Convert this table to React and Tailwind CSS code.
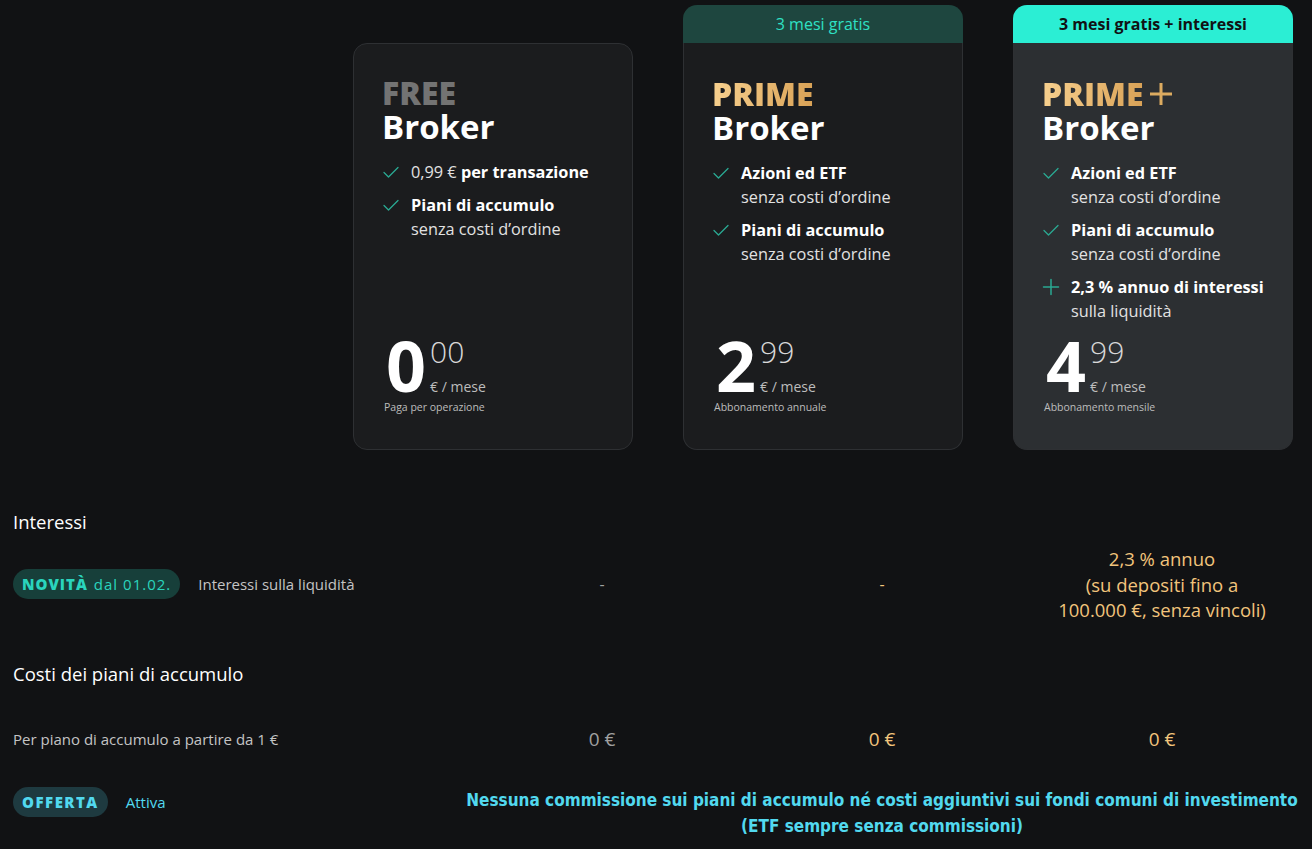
import React from "react";

const Check = () => (
  <svg width="18" height="18" viewBox="0 0 18 18" fill="none" className="shrink-0 mt-[3px]">
    <path d="M2 9.5l4.5 4.5L16 4.5" stroke="#2aa992" strokeWidth="1.3" strokeLinecap="round" strokeLinejoin="round" />
  </svg>
);

const Plus = () => (
  <svg width="18" height="18" viewBox="0 0 18 18" fill="none" className="shrink-0 mt-[3px]">
    <path d="M9 1.5v15M1.5 9h15" stroke="#2aa992" strokeWidth="1.5" strokeLinecap="round" />
  </svg>
);

const Feature = ({ icon, children }) => (
  <div className="flex gap-[11px]">
    {icon === "plus" ? <Plus /> : <Check />}
    <div className="text-[16.3px] leading-[24px] text-[#e2e2e2]">{children}</div>
  </div>
);

const B = ({ children }) => <b className="font-bold text-white">{children}</b>;

const Price = ({ whole, cents, note }) => (
  <div className="mt-auto">
    <div className="flex items-start">
      <span className="text-[70px] leading-[70px] font-bold text-white pl-[4px]">{whole}</span>
      <div className="flex flex-col ml-[4px]">
        <span className="text-[30px] leading-[29px] font-light text-[#d8d8d8] mt-[7px]">{cents}</span>
        <span className="text-[14px] leading-[13px] text-[#bdbdbd] mt-[14px]">€ / mese</span>
      </div>
    </div>
    <div className="text-[10.5px] leading-[12px] text-[#bdbdbd] mt-[1px] pl-[2px]">{note}</div>
  </div>
);

const PlanCard = ({ banner, bannerClass, bodyClass, title, plus, children, price }) => (
  <div className="flex flex-col">
    {banner && (
      <div className={`h-[38px] rounded-t-[14px] flex items-center justify-center text-[16px] ${bannerClass}`}>
        {banner}
      </div>
    )}
    <div
      className={`h-[407px] flex flex-col border border-[#2e3033] px-[28px] pb-[36px] ${
        banner ? "rounded-b-[14px] border-t-0 pt-[34px]" : "rounded-[14px] pt-[32px]"
      } ${bodyClass}`}
    >
      <div>
        <div className="flex items-center gap-[5px] text-[32px] leading-[33px] font-extrabold">{title}{plus}</div>
        <div className="text-[33px] leading-[36px] font-bold text-white">Broker</div>
      </div>
      <div className="mt-[15px] flex flex-col gap-[9px]">{children}</div>
      {price}
    </div>
  </div>
);

const gold = "bg-gradient-to-r from-[#f7d08e] to-[#d9a256] bg-clip-text text-transparent";

export default function App() {
  return (
    <div
      className="min-h-screen bg-[#111214] text-white px-[13px] pt-[5px] pb-[10px]"
      style={{ fontFamily: "'Open Sans', Lato, sans-serif" }}
    >
      <div className="grid grid-cols-[290px_280px_280px_280px] gap-x-[50px] items-end">
        <div />
        <PlanCard
          bodyClass="bg-[#1b1c1e]"
          title={<span className="text-[#737373]">FREE</span>}
          price={<Price whole="0" cents="00" note="Paga per operazione" />}
        >
          <Feature>
            0,99 € <B>per transazione</B>
          </Feature>
          <Feature>
            <B>Piani di accumulo</B>
            <br />
            senza costi d’ordine
          </Feature>
        </PlanCard>
        <PlanCard
          banner="3 mesi gratis"
          bannerClass="bg-[#1e463f] text-[#2ee0c4]"
          bodyClass="bg-[#1b1c1e]"
          title={<span className={gold}>PRIME</span>}
          price={<Price whole="2" cents="99" note="Abbonamento annuale" />}
        >
          <Feature>
            <B>Azioni ed ETF</B>
            <br />
            senza costi d’ordine
          </Feature>
          <Feature>
            <B>Piani di accumulo</B>
            <br />
            senza costi d’ordine
          </Feature>
        </PlanCard>
        <PlanCard
          banner="3 mesi gratis + interessi"
          bannerClass="bg-[#2beed4] text-[#111214] font-bold"
          bodyClass="bg-[#2c2f32]"
          title={<span className={gold}>PRIME</span>}
          plus={
            <svg width="24" height="24" viewBox="0 0 24 24" fill="none">
              <path d="M12 1v22M1 12h22" stroke="#dcab60" strokeWidth="3" />
            </svg>
          }
          price={<Price whole="4" cents="99" note="Abbonamento mensile" />}
        >
          <Feature>
            <B>Azioni ed ETF</B>
            <br />
            senza costi d’ordine
          </Feature>
          <Feature>
            <B>Piani di accumulo</B>
            <br />
            senza costi d’ordine
          </Feature>
          <Feature icon="plus">
            <B>2,3 % annuo di interessi</B>
            <br />
            sulla liquidità
          </Feature>
        </PlanCard>
      </div>

      <div className="mt-[60px] text-[18.5px] leading-[24px]">Interessi</div>
      <div className="grid grid-cols-[449px_280px_280px_280px] items-center mt-[12px]">
        <div className="flex items-center gap-[18px]">
          <span className="h-[30px] px-[9px] rounded-full bg-[#173f3a] flex items-center text-[15px] tracking-[1px] text-[#2ad4bd]">
            <b className="font-extrabold mr-[6px]">NOVITÀ</b>dal 01.02.
          </span>
          <span className="text-[15px] text-[#c4c4c4]">Interessi sulla liquidità</span>
        </div>
        <div className="text-center text-[#a0a0a0]">-</div>
        <div className="text-center text-[#f2c47c]">-</div>
        <div className="text-center text-[18.5px] leading-[25.5px] text-[#f2c47c]">
          2,3 % annuo
          <br />
          (su depositi fino a
          <br />
          100.000 €, senza vincoli)
        </div>
      </div>

      <div className="mt-[38px] text-[18.5px] leading-[26px]">Costi dei piani di accumulo</div>
      <div className="grid grid-cols-[449px_280px_280px_280px] items-center mt-[38px]">
        <div className="text-[15px] text-[#c4c4c4]">Per piano di accumulo a partire da 1 €</div>
        <div className="text-center text-[19px] text-[#a0a0a0]">0 €</div>
        <div className="text-center text-[19px] text-[#f2c47c]">0 €</div>
        <div className="text-center text-[19px] text-[#f2c47c]">0 €</div>
      </div>

      <div className="grid grid-cols-[449px_840px] items-start mt-[34px]">
        <div className="flex items-center gap-[18px]">
          <span className="h-[30px] px-[9px] rounded-full bg-[#1e3a40] flex items-center text-[15px] tracking-[1.5px] font-extrabold text-[#52d9ef]">
            OFFERTA
          </span>
          <span className="text-[15px] text-[#52d9ef]">Attiva</span>
        </div>
        <div
          className="text-center text-[17px] leading-[26px] font-bold text-[#52d9ef]"
          style={{ fontFamily: "'DejaVu Sans Condensed', 'Liberation Sans Narrow', sans-serif" }}
        >
          Nessuna commissione sui piani di accumulo né costi aggiuntivi sui fondi comuni di investimento
          <br />
          (ETF sempre senza commissioni)
        </div>
      </div>
    </div>
  );
}
